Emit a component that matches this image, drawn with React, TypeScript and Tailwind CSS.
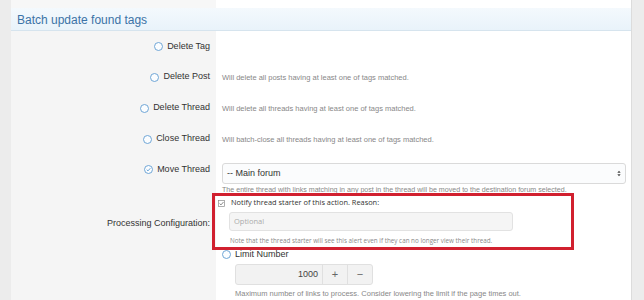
const font = { fontFamily: '"Liberation Sans", Arial, sans-serif' }

function Radio({ checked = false }: { checked?: boolean }) {
  return (
    <span className="inline-flex h-[9px] w-[9px] shrink-0 items-center justify-center rounded-full border border-[#6fa6d6] bg-[#fbfdff]">
      {checked && (
        <svg viewBox="0 0 10 10" className="h-[7px] w-[7px]">
          <path d="M2.4 5.2 L4.3 7 L7.6 3.2" fill="none" stroke="#5d9ad2" strokeWidth="1.3" />
        </svg>
      )}
    </span>
  )
}

function ActionRow({
  label,
  desc,
  height,
}: {
  label: string
  desc?: string
  height: string
}) {
  return (
    <div className={`flex ${height}`}>
      <div className="flex w-[205px] shrink-0 items-center justify-end gap-[4px] bg-[#f5f5f5] pr-[6px] pt-[1px] text-[9px] text-[#333]">
        <Radio />
        <span>{label}</span>
      </div>
      <div className="flex flex-1 items-center pl-[6px] pt-[3px] text-[7.5px] text-[#888]">{desc}</div>
    </div>
  )
}

export default function App() {
  return (
    <div className="flex h-[300px] w-[644px] overflow-hidden bg-[#ececec]" style={font}>
      <div className="w-[11px] shrink-0 bg-[#ececec]" />
      <div className="relative flex w-[621px] shrink-0 flex-col border-r border-[#dcdcdc] bg-white">
        <div className="flex h-[8px]">
          <div className="w-[205px] bg-[#f7f7f7]" />
          <div className="flex-1 bg-white" />
        </div>
        <div className="flex h-[23px] items-center border-b border-[#d6e4ee] bg-gradient-to-b from-[#f4f9fd] to-[#e9f3fa] pl-[6px] pt-[1px] text-[12px] text-[#3b73a6]">
          Batch update found tags
        </div>

        <ActionRow label="Delete Tag" height="h-[30px]" />
        <ActionRow
          label="Delete Post"
          desc="Will delete all posts having at least one of tags matched."
          height="h-[31px]"
        />
        <ActionRow
          label="Delete Thread"
          desc="Will delete all threads having at least one of tags matched."
          height="h-[31px]"
        />
        <ActionRow
          label="Close Thread"
          desc="Will batch-close all threads having at least one of tags matched."
          height="h-[31px]"
        />

        <div className="flex">
          <div className="flex w-[205px] shrink-0 items-start justify-end gap-[4px] bg-[#f5f5f5] pr-[6px] pt-[9px] text-[9px] text-[#333]">
            <span className="mt-[1px]">
              <Radio checked />
            </span>
            <span>Move Thread</span>
          </div>
          <div className="flex-1 pl-[6px] pr-[5px] pt-[9px]">
            <div className="flex h-[21px] items-center justify-between rounded-[3px] border border-[#dadada] bg-[#fbfcfd] pl-[4px] pr-[4px] text-[9px] text-[#333]">
              <span>-- Main forum</span>
              <svg viewBox="0 0 6 10" className="h-[7px] w-[4px]">
                <path d="M0.5 4 L3 1 L5.5 4 Z M0.5 6 L3 9 L5.5 6 Z" fill="#444" />
              </svg>
            </div>
            <div className="mt-[1px] h-[10px] leading-[10px] text-[7.1px] text-[#888]">
              The entire thread with links matching in any post in the thread will be moved to the destination forum selected.
            </div>
          </div>
        </div>

        <div className="flex flex-1">
          <div className="w-[205px] shrink-0 bg-[#f5f5f5] pr-[6px] pt-[22px] text-right text-[9px] text-[#333]">
            Processing Configuration:
          </div>
          <div className="flex-1 pl-[6px] pt-[3px]">
            <div style={{ fontFamily: '"Open Sans", "Liberation Sans", sans-serif' }}>
              <div className="-ml-[4px] flex h-[10px] items-center gap-[6px] text-[7.4px] text-[#333]">
                <svg viewBox="0 0 8 8" className="h-[7px] w-[7px] shrink-0">
                  <rect x="0.5" y="0.5" width="7" height="7" fill="#fff" stroke="#8a8a8a" strokeWidth="0.8" />
                  <path d="M1.8 4 L3.4 5.6 L6.3 2.3" fill="none" stroke="#6a6a6a" strokeWidth="0.9" />
                </svg>
                <span>Notify thread starter of this action. Reason:</span>
              </div>
              <div className="ml-[7px] mt-[4px] flex h-[19px] w-[284px] items-center rounded-[3px] border border-[#e2e2e2] bg-[#f5f5f5] pl-[4px] text-[7.5px] text-[#ababab]">
                Optional
              </div>
              <div className="ml-[8px] mt-[5px] text-[6.3px] leading-[9px] text-[#8a8a8a]">
                Note that the thread starter will see this alert even if they can no longer view their thread.
              </div>
            </div>

            <div className="mt-[4px] flex h-[11px] items-center gap-[4px] text-[9px] text-[#333]">
              <Radio />
              <span>Limit Number</span>
            </div>
            <div className="ml-[13px] mt-[4px] flex h-[21px] w-[138px] overflow-hidden rounded-[3px] border border-[#e0e0e0] bg-[#f2f2f2] text-[9px] text-[#444]">
              <div className="flex flex-1 items-center justify-end pr-[4px]">1000</div>
              <div className="flex w-[25px] items-center justify-center border-l border-[#e0e0e0] text-[11px] text-[#666]">+</div>
              <div className="flex w-[25px] items-center justify-center border-l border-[#e0e0e0] text-[11px] text-[#666]">−</div>
            </div>
            <div className="ml-[13px] mt-[3px] text-[7.5px] text-[#888]">
              Maximum number of links to process. Consider lowering the limit if the page times out.
            </div>
          </div>
        </div>

        <div className="pointer-events-none absolute left-[201px] top-[193px] h-[57px] w-[362px] border-[3px] border-[#d1202f]" />
      </div>
      <div className="flex-1 bg-[#ececec]" />
    </div>
  )
}
